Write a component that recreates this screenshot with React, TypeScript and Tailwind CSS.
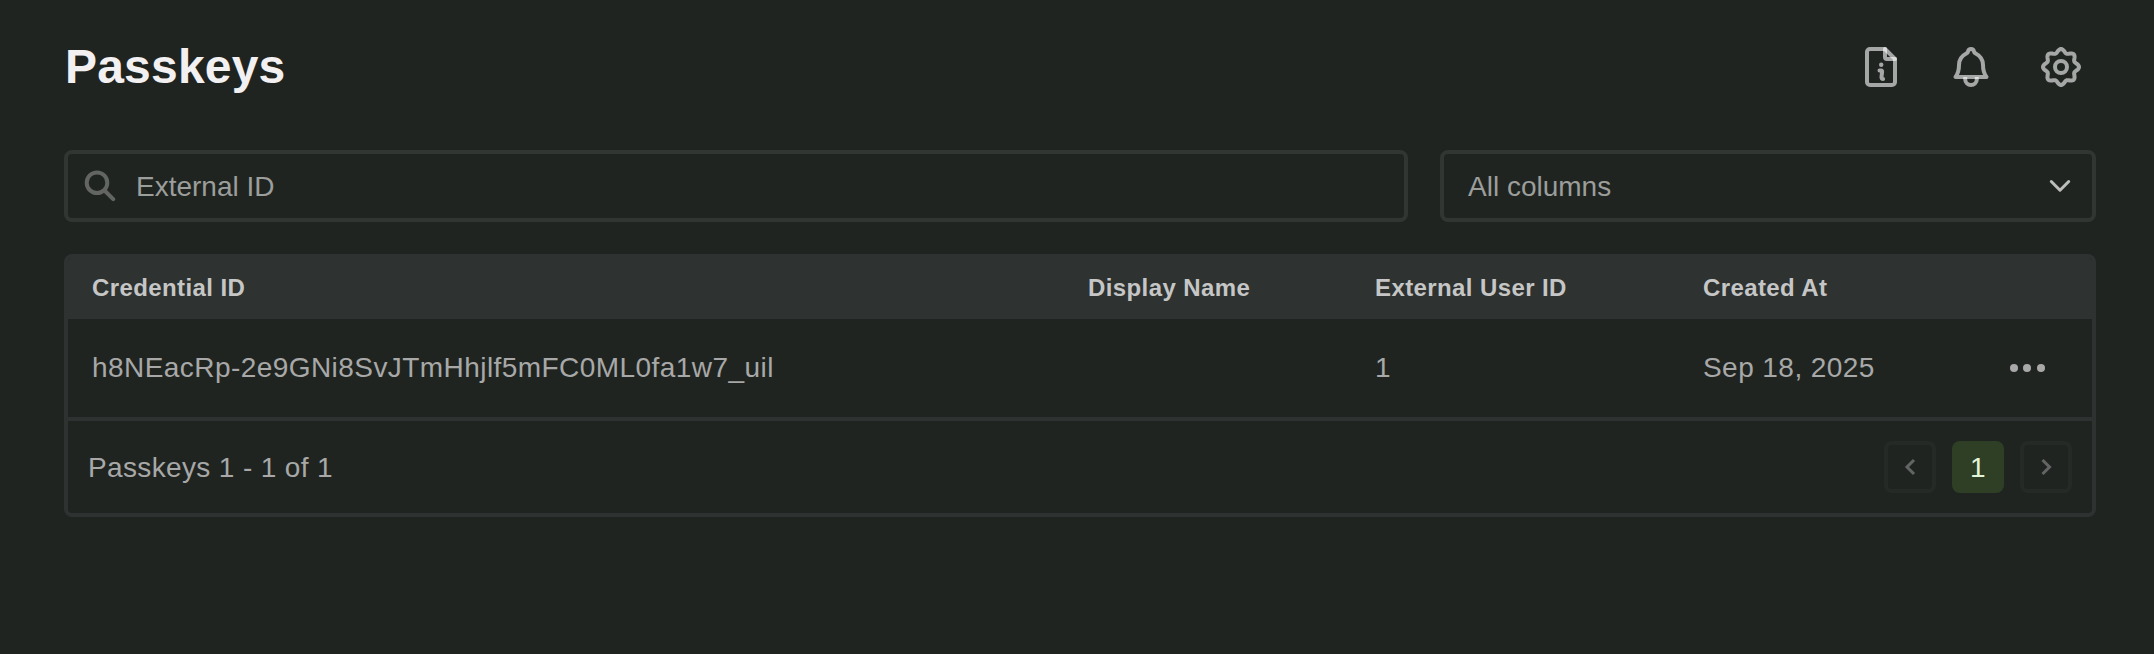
import type { ReactNode } from "react";

const columns = ["Credential ID", "Display Name", "External User ID", "Created At"];

const passkeys = [
  {
    id: "h8NEacRp-2e9GNi8SvJTmHhjlf5mFC0ML0fa1w7_uil",
    displayName: "",
    userId: "1",
    createdAt: "Sep 18, 2025",
  },
];

const gridCols = "grid grid-cols-[996px_287px_328px_1fr_85px] items-center pl-6";

// Eight rounded teeth: each tip is a smooth arc, each valley a softer one.
function gearPath(cx: number, cy: number, base: number, depth: number) {
  const points = Array.from({ length: 96 }, (_, i) => {
    const a = (i * Math.PI) / 48;
    const r = base + depth * Math.cos(8 * a);
    return `${(cx + r * Math.sin(a)).toFixed(2)} ${(cy - r * Math.cos(a)).toFixed(2)}`;
  });
  return `M${points.join("L")}z`;
}

function IconButton({ label, children }: { label: string; children: ReactNode }) {
  return (
    <button aria-label={label} className="flex size-[50px] items-center justify-center">
      <svg
        viewBox="0 0 44 44"
        className="size-11 fill-none stroke-white/60 stroke-4 [stroke-linecap:round] [stroke-linejoin:round]"
      >
        {children}
      </svg>
    </button>
  );
}

function PageButton({ label, d }: { label: string; d: string }) {
  return (
    <button
      aria-label={label}
      className="flex size-[52px] items-center justify-center rounded-lg border-4 border-[#262a27]"
    >
      <svg viewBox="0 0 44 44" className="size-11 fill-none stroke-[#636564] stroke-3">
        <path d={d} />
      </svg>
    </button>
  );
}

function Header() {
  return (
    <header className="flex h-[150px] items-start justify-between pt-[42px]">
      <h1 className="pt-px pl-px text-5xl leading-12 font-bold tracking-[0.2px] text-[#f2f0f1]">Passkeys</h1>
      <div className="flex gap-10 pr-2.5">
        <IconButton label="Documentation">
          <path d="M26 4H11a3 3 0 0 0-3 3v30a3 3 0 0 0 3 3h22a3 3 0 0 0 3-3V14z" />
          <path d="M26 4v8a2 2 0 0 0 2 2h8" />
          <path d="M20.500 25.500h1.500c.8 0 1.200.5 1.100 1.300l-.6 5.200c-.1 1.300.4 2 1.600 2" />
          <circle cx="22.200" cy="19.700" r="2.200" className="fill-white/60 stroke-none" />
        </IconButton>
        <IconButton label="Notifications">
          <path d="M22 4c-2 0-2.700 1.200-3 2.500-.2 1-.8 1.500-1.700 2C12.500 11 10 15 10 20c0 5-.5 8-3.500 12h31c-3-4-3.500-7-3.500-12 0-5-2.500-9-7.300-11.500-.9-.5-1.500-1-1.700-2C24.700 5.200 24 4 22 4z" />
          <path d="M16.200 32v2.200a5.800 5.800 0 0 0 11.600 0V32" className="[stroke-linecap:butt]" />
        </IconButton>
        <IconButton label="Settings">
          <path d={gearPath(22, 22, 16.2, 1.8)} />
          <circle cx="22" cy="22" r="6" />
        </IconButton>
      </div>
    </header>
  );
}

function Filters() {
  return (
    <div className="flex gap-8 text-[28px] text-[#9b9e9b]">
      <div className="flex h-18 w-[1344px] items-center rounded-lg border-4 border-[#323633] pl-4">
        <svg viewBox="0 0 32 32" className="size-8 fill-none stroke-[#626562] stroke-4 [stroke-linecap:round]">
          <circle cx="13" cy="12.700" r="10.300" />
          <path d="M20.500 20.500l8.700 8.700" />
        </svg>
        <span className="pt-0.5 pl-5 leading-8">External ID</span>
      </div>
      <div className="flex h-18 flex-1 items-center justify-between rounded-lg border-4 border-[#323633] pr-5 pl-6">
        <span className="pt-0.5 leading-8">All columns</span>
        <svg
          viewBox="0 0 24 24"
          className="size-6 fill-none stroke-[#bcbebc] stroke-3 [stroke-linecap:round] [stroke-linejoin:round]"
        >
          <path d="M3.300 7.500l8.700 8.700 8.700-8.700" />
        </svg>
      </div>
    </div>
  );
}

export default function App() {
  return (
    <main className="h-[654px] bg-[#202421] px-16 pr-[58px] font-['Liberation_Sans',Arial,sans-serif]">
      <div className="w-[2032px]">
        <Header />
        <Filters />
        <section className="mt-8 overflow-hidden rounded-lg border-4 border-[#2e3231] text-[28px] tracking-[0.44px] text-[#a7a8a7]">
          <div className={`${gridCols} h-[61px] bg-[#2e3231] pb-0.5 text-2xl font-bold tracking-[0.4px] text-[#c5c6c5]`}>
            {columns.map((name) => (
              <span key={name} className="leading-8">
                {name}
              </span>
            ))}
          </div>
          {passkeys.map((key) => (
            <div key={key.id} className={`${gridCols} h-[98px]`}>
              <span className="leading-8">{key.id}</span>
              <span className="leading-8">{key.displayName}</span>
              <span className="leading-8">{key.userId}</span>
              <span className="leading-8">{key.createdAt}</span>
              <button aria-label="Actions" className="flex items-center gap-[5.5px] pl-[2.5px]">
                <i className="size-2 rounded-full bg-[#a8a8a8]" />
                <i className="size-2 rounded-full bg-[#a8a8a8]" />
                <i className="size-2 rounded-full bg-[#a8a8a8]" />
              </button>
            </div>
          ))}
          <footer className="flex h-24 items-center justify-between border-t-4 border-[#2e3231] pr-5 pl-5">
            <span className="pt-0.5 tracking-[0.36px]">Passkeys 1 - 1 of 1</span>
            <nav className="flex gap-4">
              <PageButton label="Previous page" d="M26 15l-7 7 7 7" />
              <button className="size-[52px] rounded-lg bg-[#2f3f26] pt-0.5 text-[#e3f5d9]">1</button>
              <PageButton label="Next page" d="M18.500 15l7 7-7 7" />
            </nav>
          </footer>
        </section>
      </div>
    </main>
  );
}
